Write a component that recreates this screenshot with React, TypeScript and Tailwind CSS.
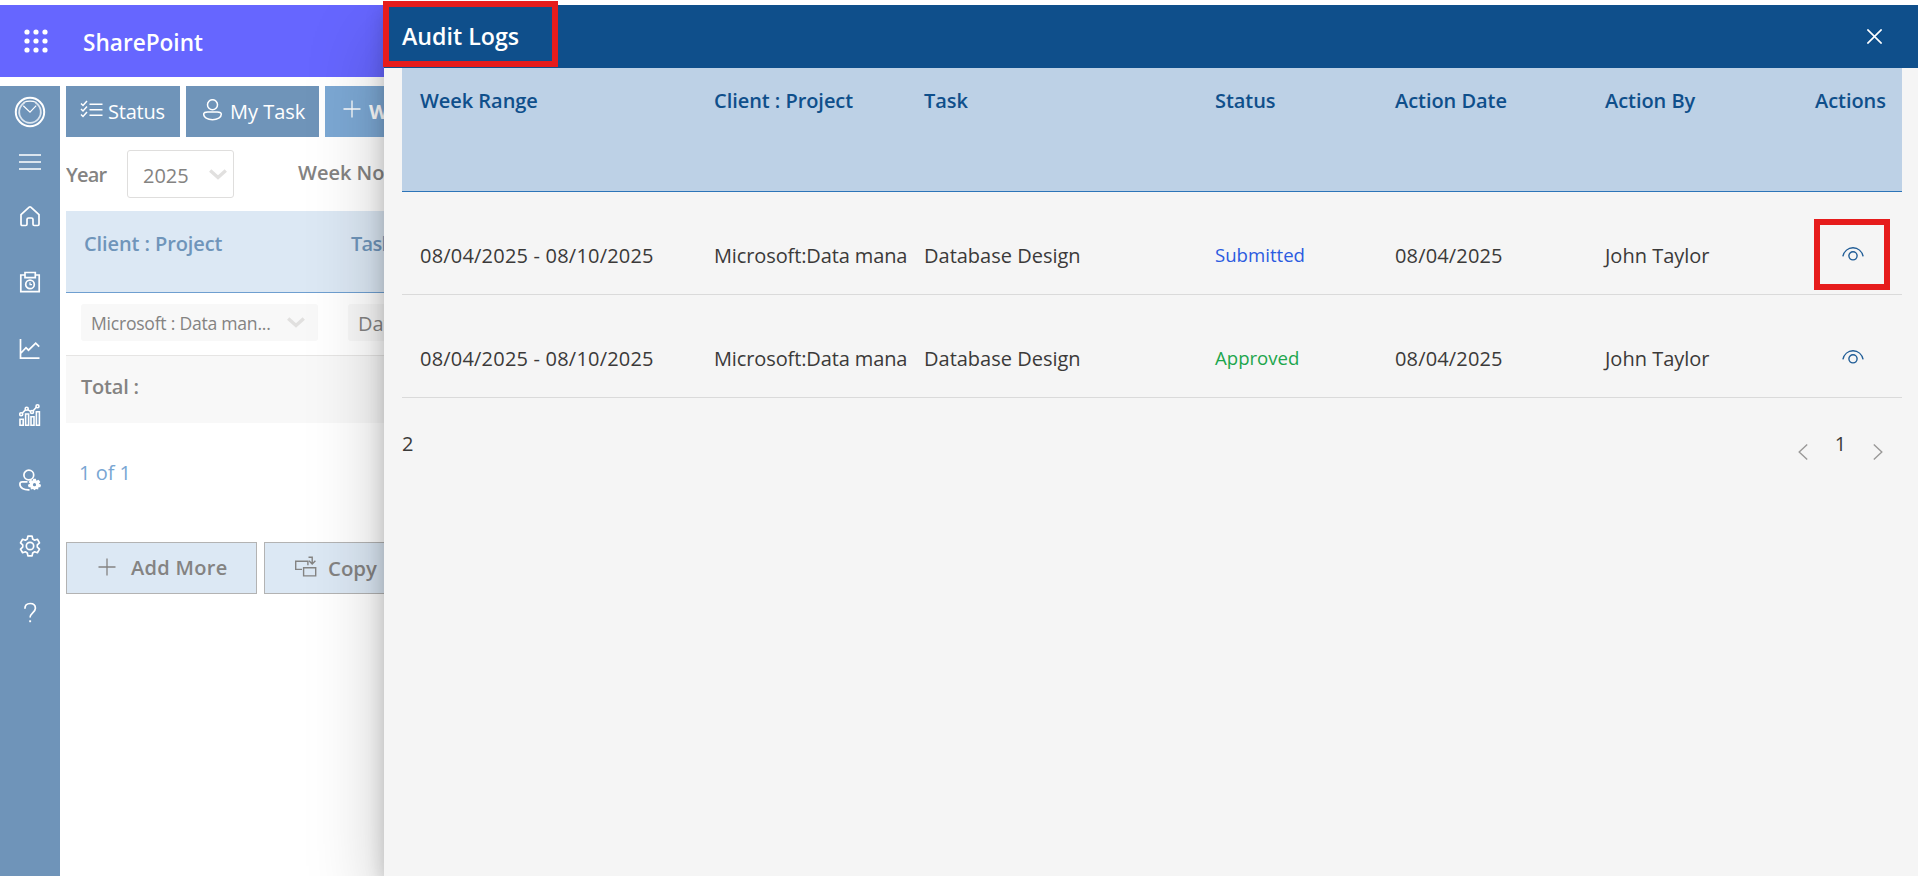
import type { ReactNode } from "react";

const columns = ["Week Range", "Client : Project", "Task", "Status", "Action Date", "Action By", "Actions"];

const logs = [
  {
    week: "08/04/2025 - 08/10/2025",
    project: "Microsoft:Data mana",
    task: "Database Design",
    status: "Submitted",
    date: "08/04/2025",
    by: "John Taylor",
    highlighted: true,
  },
  {
    week: "08/04/2025 - 08/10/2025",
    project: "Microsoft:Data mana",
    task: "Database Design",
    status: "Approved",
    date: "08/04/2025",
    by: "John Taylor",
    highlighted: false,
  },
];

const gridColumns = "grid grid-cols-[294px_210px_291px_180px_210px_210px_105px]";

function Glyph({ size = 22, stroke = 1.4, className = "", children }: { size?: number; stroke?: number; className?: string; children: ReactNode }) {
  return (
    <svg
      width={size}
      height={size}
      viewBox={`0 0 ${size} ${size}`}
      fill="none"
      stroke="currentColor"
      strokeWidth={stroke}
      className={`block shrink-0 ${className}`}
    >
      {children}
    </svg>
  );
}

function AppDots() {
  return (
    <svg width="24" height="24" viewBox="0 0 24 24" fill="white" className="block">
      {[3, 12, 21].map((y) => [3, 12, 21].map((x) => <circle key={`${x}-${y}`} cx={x} cy={y} r="2.6" />))}
    </svg>
  );
}

function Eye() {
  return (
    <svg width="22" height="14" viewBox="0 0 22 14" fill="none" stroke="#1f5c96" strokeWidth="1.4" className="block">
      <path d="M.9 9.4C2 4.3 6 .8 11 .8s9 3.5 10.1 8.6" />
      <circle cx="11" cy="8.8" r="4.1" />
    </svg>
  );
}

function Chevron() {
  return (
    <svg width="18" height="11" viewBox="0 0 18 11" fill="none" stroke="#e1e0df" strokeWidth="3.4" className="block">
      <path d="M1.2 1.5 9 8.5l7.8-7" />
    </svg>
  );
}

function Plus() {
  return (
    <Glyph size={18} stroke={1.3}>
      <path d="M9 .5v17M.5 9h17" />
    </Glyph>
  );
}

function Sidebar() {
  return (
    <nav className="flex w-[60px] shrink-0 flex-col items-center bg-[#6f94b9] text-white">
      <Glyph size={32} stroke={2} className="mt-[10px]">
        <circle cx="16" cy="16" r="14.2" />
        <path d="M10.5 6.7a10.8 10.8 0 1 0 11 0" stroke="#dbe5ef" strokeWidth="1.8" />
        <path d="M9.5 6.5q6.5-2.6 13 0" strokeWidth="1.2" />
        <path d="m9.3 9.8 6.7 6.4 6.200-6.600" strokeWidth="1.2" />
      </Glyph>
      <Glyph className="mt-[23px]">
        <path d="M0 4h22M0 11h22M0 18h22" strokeWidth="1.5" />
      </Glyph>
      <Glyph className="mt-[32px]" stroke={1.7}>
        <path d="M2 9.6 10.2 2.2q.8-.7 1.6 0L20 9.6v9.6q0 1.3-1.3 1.300h-3.400q-1.300 0-1.300-1.300v-4.700q0-1.500-1.500-1.500h-3q-1.500 0-1.500 1.500v4.700q0 1.300-1.300 1.300H3.300Q2 20.500 2 19.200z" />
      </Glyph>
      <Glyph className="mt-11" stroke={1.7}>
        <path d="M6 4H1.8v16.700h18.400V4H16M6 1.500h10.300v5.200H6z" />
        <circle cx="11" cy="13.400" r="4.300" />
        <path d="M11 11.300v2.300h2" strokeWidth="1.200" />
      </Glyph>
      <Glyph className="mt-[45px]" stroke={1.7}>
        <path d="M1.500 1v19.200h19M2 15l5-5.300 2.500 2.500 7.200-7 3.500 3.500" />
      </Glyph>
      <Glyph className="mt-11" stroke={1.6}>
        <path d="M1 21.200v-6h3.200v6zM6.600 21.200V10h3v11.200zM12 21.200v-8.500h3v8.500zM17.400 21.200V7.800h3v13.400z" />
        <path d="m3.200 9.300 3.500-3.700m2 0 3.200 2M14 7l3.500-4" />
        <circle cx="2.200" cy="10.300" r="1.500" />
        <circle cx="7.700" cy="4.800" r="1.500" />
        <circle cx="13" cy="8" r="1.500" />
        <circle cx="18.500" cy="2.300" r="1.500" />
      </Glyph>
      <Glyph className="mt-[43px]" stroke={1.7}>
        <circle cx="9.800" cy="6" r="4.900" />
        <path d="M8.500 12.900H3.200Q.9 12.900.9 15c0 4 3.800 6.200 9.600 5.900" />
        <g transform="translate(15.500 15.700)" fill="currentColor" stroke="none">
          <path
            fillRule="evenodd"
            d="M-1.300-6H1.300L1.900-4 4-4.900 5.900-2.600 4.400-1 6.600 0 5.900 2.600 4 2.600 3.600 4.900 1.500 4.200 0 5.600-1.500 4.200-3.600 4.900-4 2.600-5.900 2.600-6.600 0-4.400-1-5.900-2.600-4-4.900-1.900-4zM0-1.600A1.600 1.600 0 1 0 0 1.600 1.600 1.600 0 1 0 0-1.600z"
          />
        </g>
      </Glyph>
      <Glyph className="mt-11" stroke={1.7}>
        <path
          strokeLinejoin="round"
          d="M8.900 1.200h4.200l.6 2.900 1.900 1.100 2.800-.9 2.100 3.600-2.200 2v2.200l2.200 2-2.100 3.600-2.800-.9-1.900 1.100-.6 2.900H8.900l-.6-2.900-1.900-1.100-2.800.9-2.100-3.600 2.200-2V9.900l-2.200-2 2.100-3.600 2.800.9 1.900-1.100z"
        />
        <circle cx="11" cy="11" r="3.700" />
      </Glyph>
      <Glyph className="mt-[45px]" stroke={1.7}>
        <path d="M5.900 6.700C5.900 3.600 8 1.500 11.200 1.500s5.200 1.900 5.200 4.700c0 4.200-5.300 4.600-5.300 9.400" />
        <path d="M10.200 18.300h1.900v1.900h-1.900z" fill="currentColor" stroke="none" />
      </Glyph>
    </nav>
  );
}

function Background() {
  return (
    <div className="flex h-[871px] w-[384px] flex-col overflow-hidden whitespace-nowrap text-[20px] leading-[30px]">
      <header className="flex h-[72px] shrink-0 items-center bg-[#6666ff] pl-[24px]">
        <AppDots />
        <span className="ml-[35px] pt-[3px] text-[22.6px] font-semibold text-white">SharePoint</span>
      </header>
      <div className="mt-[9px] flex min-h-0 flex-1">
        <Sidebar />
        <main className="ml-[6px] w-[318px] shrink-0 overflow-hidden">
          <div className="flex h-[51px] w-[500px] gap-[6px] text-white">
            <button className="flex w-[114px] items-center bg-[#6f94b9] pl-[14px] font-medium tracking-[-0.2px]">
              <Glyph size={23} className="mb-1" stroke={1.4}>
                <path d="M9.500 6.200H22.500M9.500 11.700H22.500M9.500 17.200H22.500" />
                <path d="m1 5.500 2 2 4-4.500M1 11l2 2 4-4.500M1 16.500l2 2 4-4.500" strokeWidth="1.500" />
              </Glyph>
              <span className="ml-[5px]">Status</span>
            </button>
            <button className="flex w-[133px] items-center bg-[#6f94b9] pl-[17px] font-medium">
              <Glyph size={22} className="mb-1" stroke={1.5}>
                <circle cx="9.500" cy="5.700" r="5" />
                <path d="M4.700 12.900h9.600q4 0 4 2.300c0 3.200-3.700 5.600-8.800 5.600s-8.800-2.400-8.800-5.600q0-2.300 4-2.300z" />
              </Glyph>
              <span className="ml-[5px]">My Task</span>
            </button>
            <button className="flex w-[200px] items-center bg-[#7ca8d4] pl-[18px] font-bold">
              <div className="mb-[5px]">
                <Plus />
              </div>
              <span className="ml-[8px]">Week</span>
            </button>
          </div>
          <div className="flex h-[74px] w-[500px] pt-[13px] text-[#848382]">
            <span className="mt-[10px] w-[61px] font-semibold tracking-[-0.8px]">Year</span>
            <div className="flex h-12 w-[107px] items-center justify-between rounded-[3px] border border-[#dfdedd] pl-[15px] pr-[6px]">
              <span className="pt-[3px]">2025</span>
              <Chevron />
            </div>
            <span className="ml-[64px] mt-[8px] font-semibold">Week No</span>
          </div>
          <div className="flex h-[82px] w-[500px] border-b border-[#6f9fd0] bg-[#dce8f4] pt-[18px] font-semibold text-[#6f95ba]">
            <span className="w-[285px] pl-[18px] tracking-[-0.1px]">Client : Project</span>
            <span className="tracking-[-0.7px]">Task</span>
          </div>
          <div className="flex h-[63px] w-[500px] border-b border-[#e6e5e4] pl-[15px] pt-[11px] text-[#848382]">
            <div className="flex h-[37px] w-[237px] items-center justify-between rounded-[3px] bg-[#f8f8f8] pl-[10px] pr-[13px]">
              <span className="pt-px text-[17.6px] tracking-[-0.25px]">Microsoft : Data man...</span>
              <Chevron />
            </div>
            <div className="ml-[30px] flex h-[37px] w-[150px] items-center rounded-[3px] bg-[#f8f8f8] pl-[10px] pt-[3px]">
              Data
            </div>
          </div>
          <div className="h-[67px] w-[500px] bg-[#f8f8f8] pl-[15px] pt-[16px] font-semibold tracking-[-0.2px] text-[#848382]">Total :</div>
          <div className="pl-[13px] pt-[35px] text-[#79a6d3]">1 of 1</div>
          <div className="mt-[54px] flex h-[52px] w-[500px] gap-[7px] font-semibold text-[#848382]">
            <button className="flex w-[191px] items-center border border-[#b3b3b3] bg-[#dce8f4] pl-[31px]">
              <div className="mb-[3px]">
                <Plus />
              </div>
              <span className="ml-[15px] tracking-[0.3px]">Add More</span>
            </button>
            <button className="flex w-[191px] items-center border border-[#b3b3b3] bg-[#dce8f4] pl-[29px]">
              <Glyph size={23} className="mb-[3px]" stroke={1.4}>
                <path d="M8 14.400H1.700V6.300h12.200v4" />
                <path d="M9.600 12.800h12.100v8.100H9.600zM14.500 2.200h3.700v6.300M15 5.800l3.200 3.200 3.200-3.200" />
              </Glyph>
              <span className="ml-[11px] pb-px text-[20.4px]">Copy</span>
            </button>
          </div>
        </main>
      </div>
    </div>
  );
}

function Panel() {
  return (
    <section className="absolute bottom-0 right-0 top-0 w-[1534px] bg-[#f5f5f5] text-[20px] leading-[30px] text-[#3b3a39] shadow-[0_32px_72px_0_rgba(0,0,0,0.22),0_6px_18px_0_rgba(0,0,0,0.18)]">
      <header className="flex h-[63px] items-center justify-between bg-[#0f4f8b] pl-[18px] pr-[36px]">
        <h1 className="pb-[2px] text-[23.2px] font-semibold text-white">Audit Logs</h1>
        <svg width="15" height="15" viewBox="0 0 15 15" stroke="white" strokeWidth="1.6" className="block">
          <path d="m.4.4 14.200 14.200m0-14.200L.4 14.600" />
        </svg>
      </header>
      <div className="ml-[18px] w-[1500px]">
        <div className={`${gridColumns} h-[124px] border-b border-[#2c74b8] bg-[#bdd1e6] pt-[18px] font-semibold text-[#0f4f8b]`}>
          {columns.map((name) => (
            <span key={name} className="pl-[18px] tracking-[-0.05px]">
              {name}
            </span>
          ))}
        </div>
        {logs.map((log) => (
          <div key={log.status} className={`${gridColumns} h-[103px] whitespace-nowrap border-b border-[#dadada] pt-[49px]`}>
            <span className="pl-[18px] tracking-[0.2px]">{log.week}</span>
            <span className="pl-[18px] tracking-[-0.12px]">{log.project}</span>
            <span className="pl-[18px]">{log.task}</span>
            <span className={`-mt-px pl-[18px] text-[18.6px] ${log.status === "Submitted" ? "text-[#2b5be0]" : "text-[#1ca64c]"}`}>{log.status}</span>
            <span className="pl-[18px] tracking-[0.15px]">{log.date}</span>
            <span className="pl-[18px]">{log.by}</span>
            <div className="relative pl-[44.5px] pt-[5.5px]">
              <Eye />
              {log.highlighted && <div className="absolute -top-[22px] left-[17px] h-[71px] w-[76px] border-[6px] border-[#e61c1c]" />}
            </div>
          </div>
        ))}
        <footer className="flex justify-between pt-[31px]">
          <span>2</span>
          <div className="mr-[19px] flex items-start text-[#9a9998]">
            <svg width="10" height="16" viewBox="0 0 10 16" fill="none" stroke="currentColor" strokeWidth="1.4" className="mt-[15px] block">
              <path d="M9.200.5 1.200 8l8 7.500" />
            </svg>
            <span className="w-[65px] text-center text-[#3b3a39]">1</span>
            <svg width="10" height="16" viewBox="0 0 10 16" fill="none" stroke="currentColor" strokeWidth="1.4" className="mt-[15px] block">
              <path d="m.8.5 8 7.500-8 7.500" />
            </svg>
          </div>
        </footer>
      </div>
    </section>
  );
}

export default function App() {
  return (
    <div className="relative h-[876px] w-[1918px] overflow-hidden bg-white pt-[5px] font-['Open_Sans','Noto_Sans',sans-serif]">
      <div className="relative h-[871px] overflow-hidden">
        <Background />
        <Panel />
      </div>
      <div className="absolute left-[383px] top-px h-[66px] w-[174.5px] border-[6px] border-[#e61c1c]" />
    </div>
  );
}
